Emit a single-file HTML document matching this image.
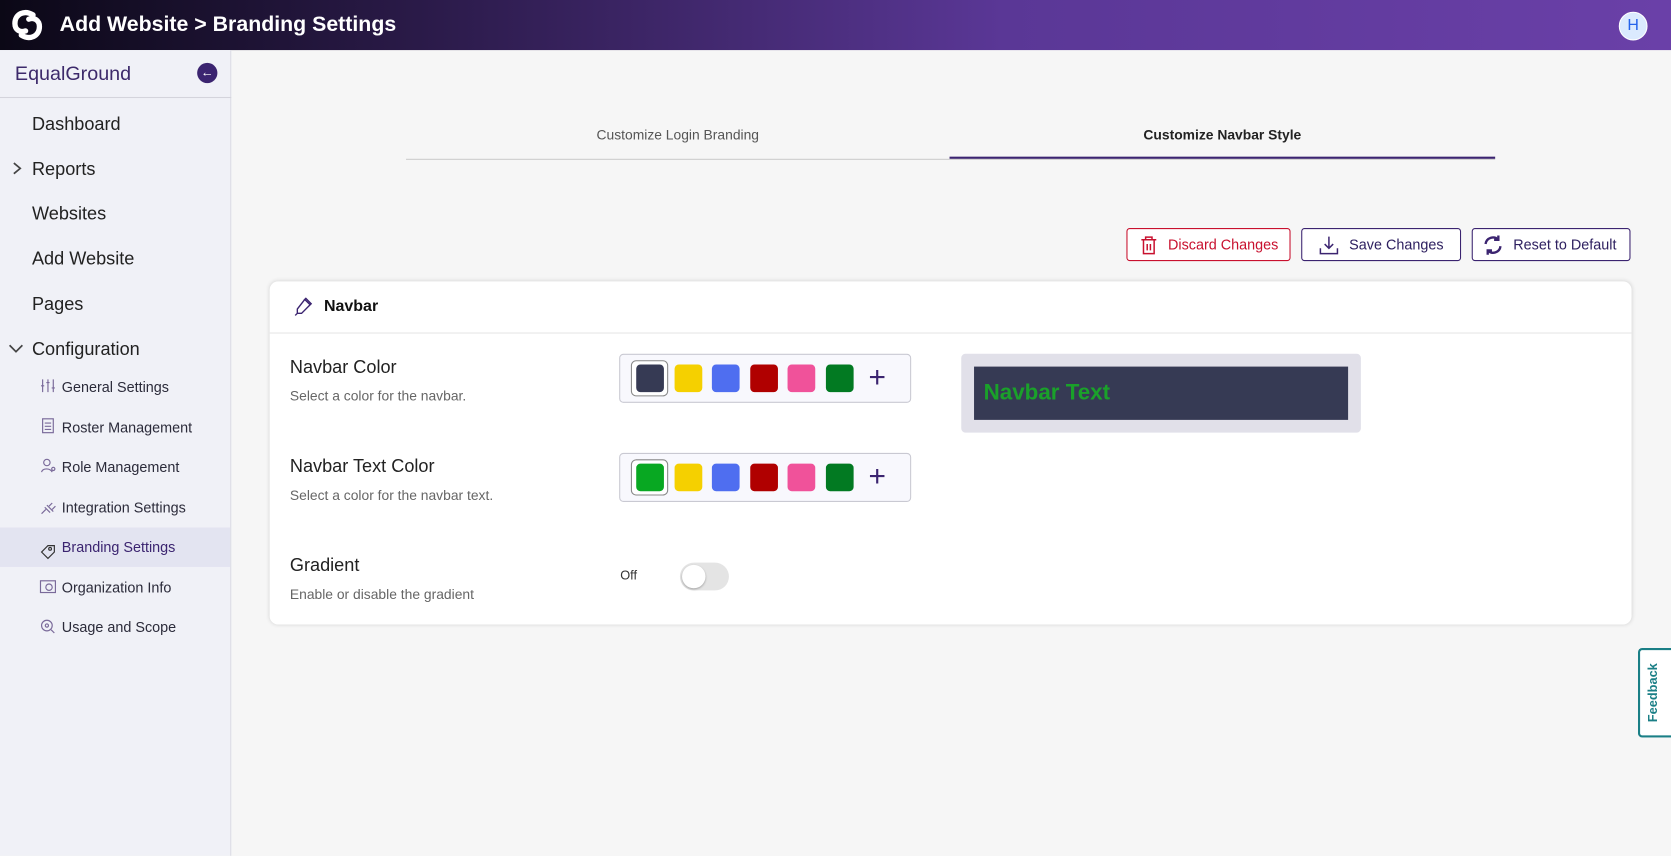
<!DOCTYPE html>
<html><head><meta charset="utf-8"><style>
*{box-sizing:border-box;margin:0;padding:0}
html,body{width:1671px;height:856px;overflow:hidden;background:#f6f6f6;font-family:"Liberation Sans",sans-serif}
#w{width:1568px;height:803px;transform:scale(1.06569);transform-origin:0 0;position:relative;background:#f6f6f6}
.a{position:absolute}
.hdr{left:0;top:0;width:1568px;height:47px;background:linear-gradient(90deg,#0b0816 0%,#2a1a48 25%,#5a3796 60%,#6a40a8 100%)}
.side{left:0;top:47px;width:217px;height:756px;background:#f0f1f7;border-right:1px solid #dcdce4}
.mi{position:absolute;left:30px;font-size:17px;color:#222}
.si{position:absolute;left:58px;font-size:13.5px;color:#2b2b3a}
.btn{position:absolute;top:214px;height:31px;border:1.5px solid #3b2470;border-radius:3px;background:#fff;font-size:13.5px;color:#2e2060;display:flex;align-items:center}
.sw{position:absolute;width:26px;height:26px;border-radius:4px;top:9px}
.pick{position:absolute;left:581px;width:274px;height:46px;background:#f8f8fd;border:1px solid #c9c9d2;border-radius:4px}
.t{position:absolute;left:272px;font-size:17px;color:#222}
.d{position:absolute;left:272px;font-size:13px;color:#666}
</style></head><body><div id="w">
<div class="a hdr"></div>
<svg class="a" style="left:9px;top:8px" width="33" height="31" viewBox="0 0 33 31"><path d="M22 6 C14 1 5 5 5 14 C5 20 10 23 15 21" stroke="#fff" stroke-width="5" fill="none" stroke-linecap="round"/><path d="M11 25 C19 30 28 26 28 17 C28 11 23 8 18 10" stroke="#fff" stroke-width="5" fill="none" stroke-linecap="round"/></svg>
<div class="a" style="left:56px;top:12px;font-size:20px;font-weight:bold;color:#fff">Add Website &gt; Branding Settings</div>
<div class="a" style="left:1519px;top:11px;width:27px;height:27px;border-radius:50%;background:#dbeafe;border:1.5px solid #fff;color:#2563eb;font-size:15px;text-align:center;line-height:24px">H</div>
<div class="a side"></div>
<div class="a" style="left:14px;top:58px;font-size:18.5px;color:#3d2a6b">EqualGround</div>
<div class="a" style="left:185px;top:59px;width:19px;height:19px;border-radius:50%;background:#3b2470;color:#fff;font-size:12px;text-align:center;line-height:18px">&#8592;</div>
<div class="a" style="left:0;top:91px;width:217px;height:1px;background:#d4d4dc"></div>
<div class="mi" style="top:107px">Dashboard</div>
<svg class="a" style="left:10px;top:151px" width="12" height="14"><path d="M3 2 L9 7 L3 12" stroke="#444" stroke-width="1.6" fill="none"/></svg>
<div class="mi" style="top:149px">Reports</div>
<div class="mi" style="top:191px">Websites</div>
<div class="mi" style="top:233px">Add Website</div>
<div class="mi" style="top:276px">Pages</div>
<svg class="a" style="left:8px;top:321px" width="14" height="12"><path d="M1 3 L7 9 L13 3" stroke="#444" stroke-width="1.6" fill="none"/></svg>
<div class="mi" style="top:318px">Configuration</div>
<div class="a" style="left:0;top:495px;width:216px;height:37px;background:#e3e4f1"></div>
<div class="si" style="top:356px">General Settings</div>
<div class="si" style="top:394px">Roster Management</div>
<div class="si" style="top:431px">Role Management</div>
<div class="si" style="top:469px">Integration Settings</div>
<div class="si" style="top:506px;color:#3b2470">Branding Settings</div>
<div class="si" style="top:544px">Organization Info</div>
<div class="si" style="top:581px">Usage and Scope</div>
<svg class="a" style="left:37px;top:354px" width="16" height="250" fill="none" stroke="#7a6a9a" stroke-width="1.1">
<path d="M3 2v12M8 2v12M13 2v12M1.5 8h3M6.5 5h3M11.5 10h3"/>
<rect x="3" y="39" width="10" height="13"/><path d="M5 43h6M5 46h6M5 49h6"/>
<circle cx="7" cy="80" r="3"/><path d="M2 89c1-4 8-4 10 0"/><circle cx="13" cy="86" r="1.5"/>
<path d="M2 128l4-4M5 122l5 5M9 121l3-3M12 124l3-3M7 120l6 6"/>
<path d="M2 164l6-6 6 0 0 6-6 6z" stroke="#333"/><circle cx="10" cy="161" r="1.3" stroke="#333"/>
<rect x="1" y="191" width="14" height="11"/><circle cx="9" cy="197" r="3"/>
<circle cx="7" cy="233" r="5"/><circle cx="7" cy="233" r="1.5"/><path d="M11 237l3 3"/>
</svg>
<div class="a" style="left:381px;top:149px;width:1022px;height:1px;background:#ccc"></div>
<div class="a" style="left:891px;top:147px;width:512px;height:2px;background:#3b2470"></div>
<div class="a" style="left:381px;top:119px;width:510px;text-align:center;font-size:13px;color:#555">Customize Login Branding</div>
<div class="a" style="left:891px;top:119px;width:512px;text-align:center;font-size:13px;font-weight:bold;color:#222">Customize Navbar Style</div>
<div class="btn" style="left:1057px;width:154px;border-color:#c8102e;color:#c8102e"><svg style="margin:0 10px 0 12px" width="16" height="18" fill="none" stroke="#c8102e" stroke-width="1.4"><path d="M1 4h14M5 4V1.5h6V4M3 4v13h10V4M6.5 8v6M9.5 8v6"/></svg>Discard Changes</div>
<div class="btn" style="left:1221px;width:150px"><svg style="margin:0 10px 0 16px" width="18" height="18" fill="none" stroke="#3b2470" stroke-width="1.4"><path d="M9 1v11M5 8l4 4 4-4M1 12v5h16v-5"/></svg>Save Changes</div>
<div class="btn" style="left:1381px;width:149px"><svg style="margin:0 9px 0 9px" width="20" height="20" fill="none" stroke="#3b2470" stroke-width="2.2"><path d="M3 9a7 7 0 0 1 12-4M17 11a7 7 0 0 1-12 4"/><path d="M15 1v4h-4M5 19v-4h4"/></svg>Reset to Default</div>
<div class="a" style="left:253px;top:264px;width:1278px;height:322px;background:#fff;border-radius:8px;box-shadow:0 0 4px rgba(0,0,0,.15)"></div>
<div class="a" style="left:253px;top:312px;width:1278px;height:1px;background:#e6e6e6"></div>
<svg class="a" style="left:274px;top:278px" width="20" height="20" fill="none" stroke="#3b2470" stroke-width="1.3"><path d="M12 3l5 5-8 8-4 0 0-4z M3 18l2-2M11 4l2-2 5 5-2 2"/></svg>
<div class="a" style="left:304px;top:279px;font-size:15px;font-weight:bold;color:#111">Navbar</div>
<div class="t" style="top:335px">Navbar Color</div>
<div class="d" style="top:364px">Select a color for the navbar.</div>
<div class="t" style="top:428px">Navbar Text Color</div>
<div class="d" style="top:457px">Select a color for the navbar text.</div>
<div class="t" style="top:521px">Gradient</div>
<div class="d" style="top:550px">Enable or disable the gradient</div>
<div class="pick" style="top:332px">
<div class="a" style="left:10px;top:5px;width:35px;height:34px;border:1px solid #888;border-radius:5px;background:#fff"></div>
<div class="sw" style="left:15px;background:#363a54"></div><div class="sw" style="left:51px;background:#f5d000"></div><div class="sw" style="left:86px;background:#4f6ef0"></div><div class="sw" style="left:122px;background:#b00000"></div><div class="sw" style="left:157px;background:#f0529a"></div><div class="sw" style="left:193px;background:#027a22"></div>
<div class="a" style="left:233px;top:5px;font-size:28px;color:#3b2470;font-weight:300;line-height:32px">+</div></div>
<div class="pick" style="top:425px">
<div class="a" style="left:10px;top:5px;width:35px;height:34px;border:1px solid #888;border-radius:5px;background:#fff"></div>
<div class="sw" style="left:15px;background:#08a822"></div><div class="sw" style="left:51px;background:#f5d000"></div><div class="sw" style="left:86px;background:#4f6ef0"></div><div class="sw" style="left:122px;background:#b00000"></div><div class="sw" style="left:157px;background:#f0529a"></div><div class="sw" style="left:193px;background:#027a22"></div>
<div class="a" style="left:233px;top:5px;font-size:28px;color:#3b2470;font-weight:300;line-height:32px">+</div></div>
<div class="a" style="left:902px;top:332px;width:375px;height:74px;background:#e1e0e9;border-radius:4px"></div>
<div class="a" style="left:914px;top:344px;width:351px;height:50px;background:#363a54"></div>
<div class="a" style="left:923px;top:357px;font-size:21px;font-weight:bold;color:#1aa12a">Navbar Text</div>
<div class="a" style="left:582px;top:533px;font-size:12px;color:#333">Off</div>
<div class="a" style="left:638px;top:528px;width:46px;height:26px;border-radius:13px;background:#e4e4e4"></div>
<div class="a" style="left:640px;top:530px;width:22px;height:22px;border-radius:50%;background:#fff;box-shadow:0 1px 2px rgba(0,0,0,.3)"></div>
<div class="a" style="left:1537px;top:608px;width:31px;height:84px;background:#fff;border:2px solid #1a7f86;border-right:none;border-radius:4px 0 0 4px"></div>
<div class="a" style="left:1512px;top:640px;width:84px;height:20px;transform:rotate(-90deg);text-align:center;font-size:12px;font-weight:bold;color:#1a7f86">Feedback</div>
</div></body></html>
